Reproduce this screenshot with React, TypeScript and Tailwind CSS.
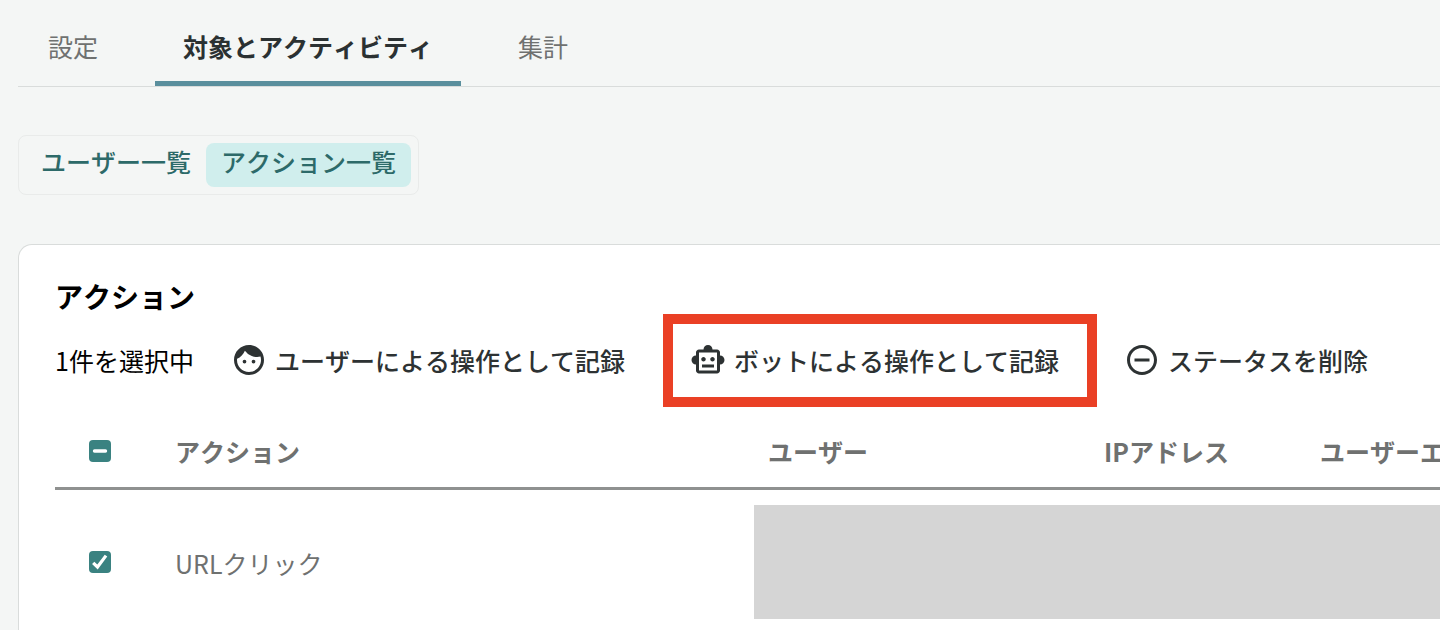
import React, { useEffect, useRef, useState } from 'react';
import { MdFace, MdOutlineSmartToy, MdRemoveCircleOutline } from 'react-icons/md';

const TABS = ['設定', '対象とアクティビティ', '集計'];
const VIEWS = ['ユーザー一覧', 'アクション一覧'];

interface CheckboxProps {
  label: string;
  checked: boolean;
  indeterminate?: boolean;
  onChange: (checked: boolean) => void;
}

const Checkbox = ({ label, checked, indeterminate = false, onChange }: CheckboxProps) => {
  const ref = useRef<HTMLInputElement>(null);
  const filled = checked || indeterminate;

  useEffect(() => {
    if (ref.current) ref.current.indeterminate = indeterminate;
  }, [indeterminate]);

  return (
    <label className="relative block size-[22px]">
      <input
        ref={ref}
        type="checkbox"
        aria-label={label}
        checked={checked}
        onChange={(e) => onChange(e.target.checked)}
        className={`block size-[22px] appearance-none rounded ${filled ? 'bg-[#3a8281]' : 'border-2 border-[#8f9190] bg-white'}`}
      />
      {filled && (
        <svg viewBox="0 0 22 22" className="pointer-events-none absolute inset-0 size-[22px]" fill="none" stroke="#fff">
          {indeterminate ? (
            <path d="M5.5 11h11" strokeWidth="3.4" strokeLinecap="round" />
          ) : (
            <path d="M4.2 11.8l4.3 4.2L17 4.6" strokeWidth="3.2" />
          )}
        </svg>
      )}
    </label>
  );
};

interface ActionButtonProps {
  icon: React.ReactNode;
  label: string;
  highlighted?: boolean;
}

const ActionButton = ({ icon, label, highlighted }: ActionButtonProps) => (
  <button type="button" className="relative flex shrink-0 items-center gap-2 font-medium text-[#2d3233]">
    {icon}
    <span>{label}</span>
    {highlighted && (
      <span className="pointer-events-none absolute -top-7 -right-[38px] -bottom-[29px] -left-[27px] border-10 border-[#ea4025]" />
    )}
  </button>
);

export default function App() {
  const [tab, setTab] = useState(1);
  const [view, setView] = useState(1);
  const [selected, setSelected] = useState(true);

  return (
    <div className="flex min-h-screen flex-col overflow-hidden bg-[#f4f6f5] pl-[18px] font-['Noto_Sans_CJK_JP',sans-serif] text-[25px] leading-9 whitespace-nowrap [font-kerning:none]">
      <nav className="flex gap-[29px] border-b border-[#d9dcdb] pl-0.5">
        {TABS.map((name, i) => (
          <button
            key={name}
            type="button"
            onClick={() => setTab(i)}
            className={`border-b-5 px-7 pt-7 pb-[17px] ${
              i === tab ? 'border-[#5a8f9d] font-bold text-[#2b3132]' : 'border-transparent text-[#6f7170]'
            }`}
          >
            {name}
          </button>
        ))}
      </nav>

      <div className="mt-12 flex self-start rounded-lg border border-[#e9ebea] p-[7px]">
        {VIEWS.map((name, i) => (
          <button
            key={name}
            type="button"
            onClick={() => setView(i)}
            className={`rounded-lg px-[15px] pb-2 font-medium text-[#2d6a69] ${i === view ? 'bg-[#d0eeed]' : ''}`}
          >
            {name}
          </button>
        ))}
      </div>

      {/* Card runs off the right side of the viewport */}
      <main className="mt-[49px] flex-1 rounded-tl-[14px] border-t border-l border-[#d9dcdb] bg-white pl-9">
        <h2 className="pt-[33px] text-[28px] font-bold text-black">アクション</h2>

        <div className="mt-7 flex items-center gap-[37px]">
          <p className="text-black">{selected ? 1 : 0}件を選択中</p>
          <div className="flex gap-[65px]">
            <ActionButton icon={<MdFace size={36} />} label="ユーザーによる操作として記録" />
            <ActionButton icon={<MdOutlineSmartToy size={36} />} label="ボットによる操作として記録" highlighted />
            <ActionButton icon={<MdRemoveCircleOutline size={36} />} label="ステータスを削除" />
          </div>
        </div>

        <table className="mt-[37px] w-full table-fixed border-separate border-spacing-0 text-left text-[#6f7170]">
          <colgroup>
            <col className="w-[106px]" />
            <col />
            <col className="w-[336px]" />
            <col className="w-[216px]" />
            <col className="w-[134px]" />
          </colgroup>
          <thead>
            <tr className="[&>th]:h-[75px] [&>th]:overflow-hidden [&>th]:border-b-3 [&>th]:border-[#8f9190] [&>th]:px-3.5">
              <th>
                <div className="pl-5">
                  <Checkbox label="すべて選択" checked={false} indeterminate={selected} onChange={setSelected} />
                </div>
              </th>
              <th>アクション</th>
              <th>ユーザー</th>
              <th>IPアドレス</th>
              <th>ユーザーエージェント</th>
            </tr>
          </thead>
          <tbody>
            <tr>
              <td className="px-3.5">
                <div className="pl-5">
                  <Checkbox label="URLクリック" checked={selected} onChange={setSelected} />
                </div>
              </td>
              <td className="px-3.5 pt-0.5">URLクリック</td>
              <td colSpan={3} className="py-[15px]">
                <div className="h-[114px] bg-[#d5d5d5]" />
              </td>
            </tr>
          </tbody>
        </table>
      </main>
    </div>
  );
}
